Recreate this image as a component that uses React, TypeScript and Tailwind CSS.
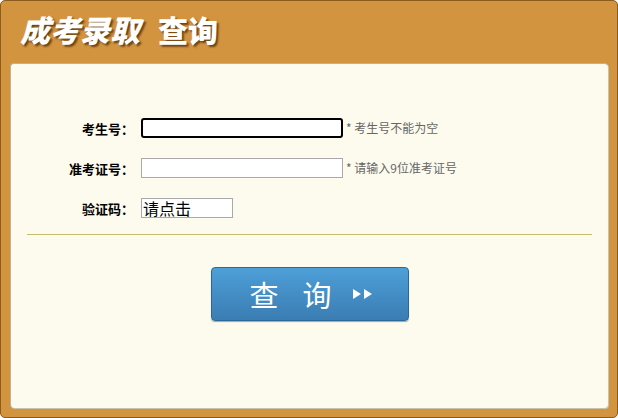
import React from 'react';

const cjk = { fontFamily: '"Noto Sans CJK SC", "Noto Sans", sans-serif' };

function FormRow({ label, children }: { label: string; children: React.ReactNode }) {
  return (
    <div className="flex items-center h-[20px]">
      <label className="w-[120px] pr-[7px] text-right text-[13px] font-bold text-black leading-none">{label}</label>
      {children}
    </div>
  );
}

export default function App() {
  return (
    <div className="w-[618px] h-[418px] bg-white" style={cjk}>
      <div className="w-full h-full flex flex-col bg-[#d39440] border border-[#8d5c1d] rounded-[5px]">
        <div className="h-[62px] flex items-center pl-[19px] pb-[6px]">
          <h1 className="text-[30px] font-black text-white leading-none [text-shadow:2px_2px_2px_#6b4313]">
            <span className="italic">成考录取</span>
            <span className="ml-[18px]">查询</span>
          </h1>
        </div>
        <div className="flex-1 mx-[9px] mb-[9px] bg-[#fdfbee] rounded-[4px] border-l border-t border-[#b9b3a0] shadow-[1px_1px_0_#c9c2ad] flex flex-col">
          <div className="pt-[54px] pl-[10px] flex flex-col gap-[20px]">
            <FormRow label="考生号：">
              <input className="w-[202px] h-[20px] border-2 border-black rounded-[3px] bg-white outline-none" />
              <span className="ml-[3px] text-[12px] text-[#666]">* 考生号不能为空</span>
            </FormRow>
            <FormRow label="准考证号：">
              <input className="w-[202px] h-[20px] border border-[#a9a9a9] bg-white outline-none" />
              <span className="ml-[3px] text-[12px] text-[#666]">* 请输入9位准考证号</span>
            </FormRow>
            <FormRow label="验证码：">
              <div className="w-[92px] h-[20px] border border-[#a9a9a9] bg-white text-[16px] leading-[18px] pl-[1px] text-black">请点击</div>
            </FormRow>
          </div>
          <div className="mt-[16px] mx-[16px] h-px bg-[#c8bb6c]" />
          <div className="flex justify-center pt-[32px]">
            <button className="w-[198px] h-[54px] rounded-[4px] border border-[#2c689a] bg-gradient-to-b from-[#4e9fd8] to-[#3a7db3] shadow-[0_1px_1px_rgba(0,0,0,0.35)] flex items-center pl-[38px] text-white">
              <span className="text-[29px] leading-none tracking-[24px]">查询</span>
              <svg width="22" height="12" viewBox="0 0 22 12" className="ml-[-4px]">
                <polygon points="1,1 9,6 1,11" fill="#fff" />
                <polygon points="12,1 20,6 12,11" fill="#fff" />
              </svg>
            </button>
          </div>
        </div>
      </div>
    </div>
  );
}
